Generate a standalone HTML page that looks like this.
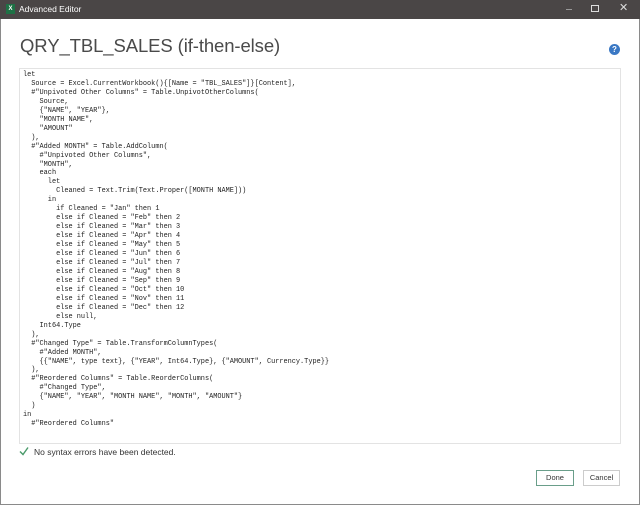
<!DOCTYPE html>
<html><head><meta charset="utf-8"><style>
*{margin:0;padding:0;box-sizing:border-box}
body{width:640px;height:505px;background:#fff;position:relative;overflow:hidden;font-family:"Liberation Sans",sans-serif}
.tb{position:absolute;left:0;top:0;width:640px;height:19px;background:#4a4646;color:#fff;font-size:8.5px}
.tb .t{position:absolute;left:19px;top:4px}
.xl{position:absolute;left:6px;top:4px;width:9px;height:10px;background:#1e7145;color:#fff;font-size:6px;font-weight:bold;line-height:10px;text-align:center}
.frame{position:absolute;left:0;top:19px;width:640px;height:486px;border:1px solid #8a8a8a;border-top:none}
h1{position:absolute;left:20px;top:35px;font-size:18.5px;font-weight:normal;color:#4a4a4a;letter-spacing:-0.1px}
.code{position:absolute;left:19px;top:68px;width:602px;height:376px;border:1px solid #e3e3e3}
pre{position:absolute;left:3px;top:2px;font-family:"Liberation Mono",monospace;font-size:6.9px;line-height:8.95px;color:#222}
.ok{position:absolute;left:34px;top:447px;font-size:8.5px;color:#333}
.chk{position:absolute;left:19px;top:446px}
.btn{position:absolute;top:470px;height:16px;font-size:7.5px;text-align:center;line-height:14px;color:#333;border:1px solid #ccc;background:#fff}
.help{position:absolute;left:609px;top:44px;width:11px;height:11px;border-radius:50%;background:#3a78c4;color:#fff;font-size:8px;font-weight:bold;text-align:center;line-height:11px}
</style></head><body>
<div class="tb"><div class="xl">X</div><span class="t">Advanced Editor</span>
<div style="position:absolute;left:566px;top:9px;width:6px;height:1px;background:#999"></div>
<div style="position:absolute;left:591px;top:5px;width:8px;height:7px;border:1px solid #ddd"></div>
<div style="position:absolute;left:619px;top:1px;color:#ddd;font-size:11px">✕</div>
</div>
<div class="frame"></div>
<h1>QRY_TBL_SALES (if-then-else)</h1>
<div class="help">?</div>
<div class="code"><pre>let
  Source = Excel.CurrentWorkbook(){[Name = "TBL_SALES"]}[Content],
  #"Unpivoted Other Columns" = Table.UnpivotOtherColumns(
    Source,
    {"NAME", "YEAR"},
    "MONTH NAME",
    "AMOUNT"
  ),
  #"Added MONTH" = Table.AddColumn(
    #"Unpivoted Other Columns",
    "MONTH",
    each
      let
        Cleaned = Text.Trim(Text.Proper([MONTH NAME]))
      in
        if Cleaned = "Jan" then 1
        else if Cleaned = "Feb" then 2
        else if Cleaned = "Mar" then 3
        else if Cleaned = "Apr" then 4
        else if Cleaned = "May" then 5
        else if Cleaned = "Jun" then 6
        else if Cleaned = "Jul" then 7
        else if Cleaned = "Aug" then 8
        else if Cleaned = "Sep" then 9
        else if Cleaned = "Oct" then 10
        else if Cleaned = "Nov" then 11
        else if Cleaned = "Dec" then 12
        else null,
    Int64.Type
  ),
  #"Changed Type" = Table.TransformColumnTypes(
    #"Added MONTH",
    {{"NAME", type text}, {"YEAR", Int64.Type}, {"AMOUNT", Currency.Type}}
  ),
  #"Reordered Columns" = Table.ReorderColumns(
    #"Changed Type",
    {"NAME", "YEAR", "MONTH NAME", "MONTH", "AMOUNT"}
  )
in
  #"Reordered Columns"</pre></div>
<svg class="chk" width="10" height="10" viewBox="0 0 10 10"><path d="M1 5.5 L4 8.5 L9 1.5" stroke="#4a9a6a" stroke-width="1.4" fill="none"/></svg>
<div class="ok">No syntax errors have been detected.</div>
<div class="btn" style="left:536px;width:38px;border-color:#6a9e8a">Done</div>
<div class="btn" style="left:583px;width:37px">Cancel</div>
</body></html>
